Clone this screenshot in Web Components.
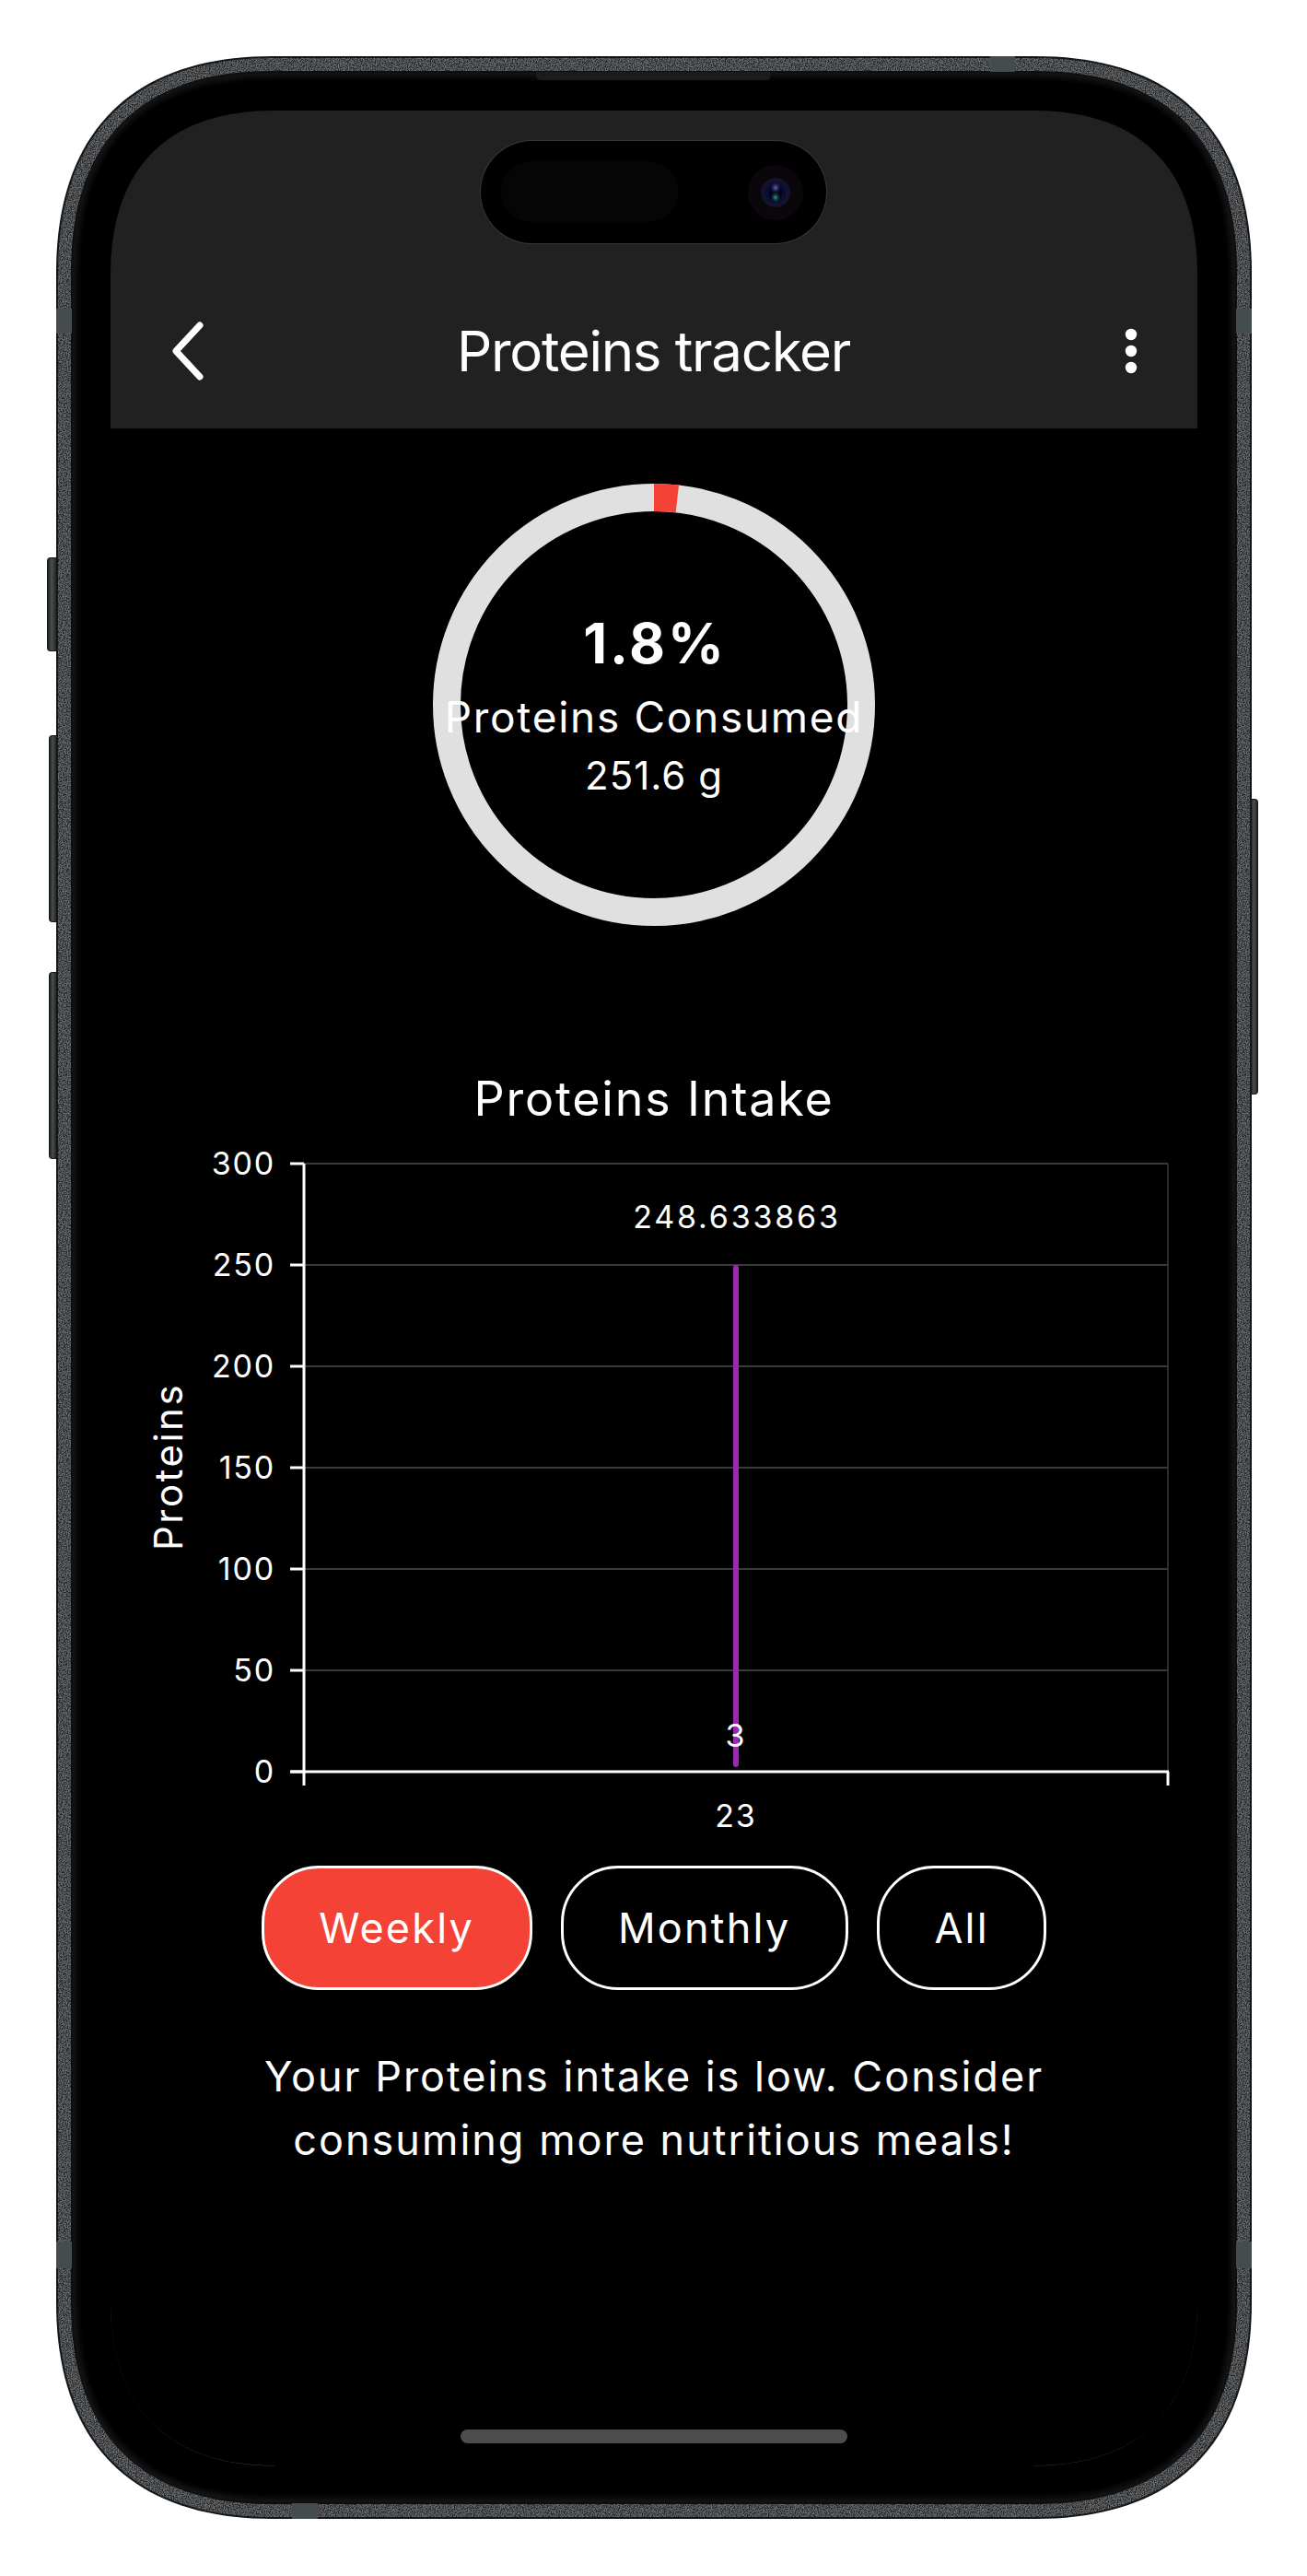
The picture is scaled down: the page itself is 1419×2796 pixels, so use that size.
<!DOCTYPE html>
<html>
<head>
<meta charset="utf-8">
<title>Proteins tracker</title>
<style>
  html, body { margin: 0; background: #fff; }
  body { padding: 61px 0 0 61px; height: 2735px; overflow: hidden; font-family: Inter, "Liberation Sans", sans-serif; color: #fff; }
</style>
</head>
<body>
<phone-frame>
  <app-bar title="Proteins tracker"></app-bar>
  <progress-ring percent="1.8">
    <strong slot="value">1.8%</strong>
    <span slot="label">Proteins Consumed</span>
    <span slot="amount">251.6 g</span>
  </progress-ring>
  <intake-chart title="Proteins Intake"></intake-chart>
  <range-tabs>
    <range-button active>Weekly</range-button>
    <range-button>Monthly</range-button>
    <range-button>All</range-button>
  </range-tabs>
  <advice-text>Your Proteins intake is low. Consider consuming more nutritious meals!</advice-text>
</phone-frame>

<script>
// continuous corner rect, a = corner length, k = control point ratio
function cornerPath(x, y, w, h, a, k = 0.65) {
  const c = a * (1 - k), r = x + w, b = y + h;
  return `M${x + a} ${y}H${r - a}C${r - c} ${y} ${r} ${y + c} ${r} ${y + a}` +
    `V${b - a}C${r} ${b - c} ${r - c} ${b} ${r - a} ${b}` +
    `H${x + a}C${x + c} ${b} ${x} ${b - c} ${x} ${b - a}` +
    `V${y + a}C${x} ${y + c} ${x + c} ${y} ${x + a} ${y}Z`;
}

class PhoneFrame extends HTMLElement {
  constructor() {
    super();
    const W = 1298, H = 2673;
    const inset = (d, a) => cornerPath(d, d, W - d * 2, H - d * 2, a);
    const root = this.attachShadow({mode: 'open'});
    const screenPath = cornerPath(0, 0, 1180, 2556, 178);
    root.innerHTML = `
      <style>
        :host { display: block; position: relative; width: ${W}px; height: ${H}px; box-sizing: border-box; padding: 59px; }
        .shell { position: absolute; left: 0; top: 0; }
        .btn { position: absolute; background: linear-gradient(90deg, #1e2021, #4a4e4f 45%, #232627); border: 1px solid #141617; box-sizing: border-box; }
        .btn.left { border-radius: 4px 0 0 4px; border-right: 0; }
        .btn.right { border-radius: 0 4px 4px 0; border-left: 0; }
        .screen { position: relative; width: 1180px; height: 2556px; background: #000; clip-path: path('${screenPath}'); display: flex; flex-direction: column; align-items: center; }
        .island { position: absolute; left: 402px; top: 33px; width: 375px; height: 111px; border-radius: 56px; background: #000; box-shadow: 0 0 0 1px rgba(255,255,255,.1); }
        .sensor { position: absolute; left: 22px; top: 22px; width: 193px; height: 66px; border-radius: 33px; background: #050505; }
        .lens { position: absolute; left: 290px; top: 26px; }
        .home { position: absolute; left: 380px; top: 2517px; width: 420px; height: 15px; border-radius: 8px; background: #4d4d4d; }
      </style>
      <div class="btn left" style="left:-10px;top:544px;width:10px;height:102px"></div>
      <div class="btn left" style="left:-8px;top:737px;width:8px;height:203px"></div>
      <div class="btn left" style="left:-8px;top:994px;width:8px;height:203px"></div>
      <div class="btn right" style="left:${W - 1}px;top:806px;width:8px;height:321px"></div>
      <svg class="shell" width="${W}" height="${H}" viewBox="0 0 ${W} ${H}">
        <defs>
          <filter id="grain" x="0" y="0" width="100%" height="100%">
            <feTurbulence type="fractalNoise" baseFrequency="0.8" numOctaves="2" seed="4" result="n"/>
            <feColorMatrix in="n" type="matrix" values="0 0 0 0 1  0 0 0 0 1  0 0 0 0 1  0 0 0 .4 -.14" result="a"/>
            <feComposite in="a" in2="SourceAlpha" operator="in" result="g"/>
            <feMerge><feMergeNode in="SourceGraphic"/><feMergeNode in="g"/></feMerge>
          </filter>
          <filter id="soft" x="-5%" y="-5%" width="110%" height="110%"><feGaussianBlur stdDeviation="4"/></filter>
          <clipPath id="inner"><path d="${inset(18, 212)}"/></clipPath>
        </defs>
        <path d="${inset(0, 235)}" fill="#141617"/>
        <path d="${inset(2, 233)}" fill="#24282a" filter="url(#grain)"/>
        <path d="${inset(16, 218)}" fill="#0d0e0f"/>
        <path d="${inset(18, 212)}" fill="#000"/>
        <g clip-path="url(#inner)"><path d="${inset(18, 212)}" fill="none" stroke="#444" stroke-width="3" filter="url(#soft)"/></g>
        <!-- antenna bands -->
        <g fill="#454c4e">
          <rect x="1014" y="0" width="27" height="17"/>
          <rect x="256" y="${H - 17}" width="28" height="17"/>
          <rect x="0" y="274" width="17" height="27"/>
          <rect x="${W - 17}" y="274" width="17" height="27"/>
          <rect x="0" y="2372" width="17" height="29"/>
          <rect x="${W - 17}" y="2372" width="17" height="29"/>
        </g>
        <path d="M521 17H776V20Q776 26 770 26H527Q521 26 521 20Z" fill="#1b1b1b"/>
        <!-- faint screen edge at the lower corners -->
        <g fill="none" stroke="#3a3a3a" stroke-width="1">
          <path d="M59.500 2437C59.500 2552.700 121.800 2615 237.500 2615"/>
          <path d="M1238.500 2437C1238.500 2552.700 1176.200 2615 1060.500 2615"/>
        </g>
      </svg>
      <div class="screen">
        <slot></slot>
        <div class="island">
          <div class="sensor"></div>
          <svg class="lens" width="60" height="60" viewBox="0 0 60 60">
            <defs>
              <radialGradient id="l1" cx="50%" cy="28%" r="30%"><stop offset="0" stop-color="#6a68c8"/><stop offset="1" stop-color="#101040" stop-opacity="0"/></radialGradient>
              <radialGradient id="l2" cx="50%" cy="72%" r="28%"><stop offset="0" stop-color="#2fa58a"/><stop offset="1" stop-color="#101040" stop-opacity="0"/></radialGradient>
            </defs>
            <circle cx="30" cy="30" r="30" fill="#0a060c"/>
            <circle cx="30" cy="30" r="16" fill="#12142c"/>
            <ellipse cx="30" cy="30" rx="11" ry="12" fill="#0b0b34"/>
            <ellipse cx="30" cy="30" rx="7" ry="10" fill="#03030c"/>
            <ellipse cx="30" cy="30" rx="11" ry="12" fill="url(#l1)"/>
            <ellipse cx="30" cy="30" rx="11" ry="12" fill="url(#l2)"/>
          </svg>
        </div>
        <div class="home"></div>
      </div>
    `;
  }
}

class AppBar extends HTMLElement {
  constructor() {
    super();
    const root = this.attachShadow({mode: 'open'});
    root.innerHTML = `
      <style>
        :host { display: grid; grid-template-columns: 1fr auto 1fr; align-items: center; box-sizing: border-box; width: 100%; height: 345px; padding: 201px 65px 24px 64px; background: #212121; }
        h1 { margin: 0; font: 380 60px/120px Inter, sans-serif; letter-spacing: -1.300px; color: #fff; white-space: nowrap; }
        svg { display: block; }
        .more { justify-self: end; }
      </style>
      <svg width="40" height="64" viewBox="0 0 40 64"><path d="M33 4L7 32L33 60" fill="none" stroke="#fff" stroke-width="7" stroke-linecap="round" stroke-linejoin="round"/></svg>
      <h1>${this.getAttribute('title')}</h1>
      <svg class="more" width="14" height="54" viewBox="0 0 14 54" fill="#fff"><circle cx="7" cy="9" r="6.200"/><circle cx="7" cy="27" r="6.200"/><circle cx="7" cy="45" r="6.200"/></svg>
    `;
  }
}

class ProgressRing extends HTMLElement {
  constructor() {
    super();
    const percent = parseFloat(this.getAttribute('percent'));
    const r = 225, c = 2 * Math.PI * r;
    const root = this.attachShadow({mode: 'open'});
    root.innerHTML = `
      <style>
        :host { display: grid; width: 480px; height: 480px; margin-top: 60px; color: #fff; }
        svg, .text { grid-area: 1 / 1; }
        svg { display: block; }
        .text { display: flex; flex-direction: column; align-items: center; padding-top: 137px; white-space: nowrap; }
        ::slotted([slot=value]) { font: 700 60px/72px Inter, sans-serif; letter-spacing: 2.800px; margin-left: 2px; }
        ::slotted([slot=label]) { font: 380 46px/64px Inter, sans-serif; letter-spacing: 1.700px; margin-top: 12px; }
        ::slotted([slot=amount]) { font: 380 42px/56px Inter, sans-serif; letter-spacing: 1px; margin-top: 4px; }
      </style>
      <svg width="480" height="480" viewBox="0 0 480 480">
        <circle cx="240" cy="240" r="${r}" fill="none" stroke="#e0e0e0" stroke-width="30"/>
        <circle cx="240" cy="240" r="${r}" fill="none" stroke="#f44336" stroke-width="30"
          stroke-dasharray="${c * percent / 100} ${c}" transform="rotate(-90 240 240)"/>
      </svg>
      <div class="text"><slot name="value"></slot><slot name="label"></slot><slot name="amount"></slot></div>
    `;
  }
}

class IntakeChart extends HTMLElement {
  constructor() {
    super();
    const left = 330, right = 1268, top = 1263, step = 110, bottom = top + step * 6;
    let ticks = '';
    for (let i = 0; i <= 6; i++) {
      const y = top + step * i;
      if (i < 6) ticks += `<line class="grid" x1="${left}" x2="${right}" y1="${y}" y2="${y}"/>`;
      ticks += `<line class="axis" x1="${left - 15}" x2="${left}" y1="${y}" y2="${y}"/>`;
      ticks += `<text class="tick" x="299" y="${y + 12}" text-anchor="end">${300 - 50 * i}</text>`;
    }
    const root = this.attachShadow({mode: 'open'});
    root.innerHTML = `
      <style>
        :host { display: block; width: 100%; margin-top: 156px; }
        h2 { margin: 0; text-align: center; font: 380 52px/64px Inter, sans-serif; letter-spacing: 1.800px; color: #fff; }
        svg { display: block; margin-top: 1px; }
        text { fill: #fff; font-family: Inter, sans-serif; font-weight: 380; }
        .tick { font-size: 34px; letter-spacing: 1.800px; }
        .value { font-size: 34px; letter-spacing: 2.800px; }
        .name { font-size: 42px; letter-spacing: 2.500px; }
        .grid { stroke: #3a3a3a; stroke-width: 2; }
        .axis { stroke: #fff; stroke-width: 3; }
      </style>
      <h2>${this.getAttribute('title')}</h2>
      <svg width="1180" height="770" viewBox="120 1226 1180 770">
        ${ticks}
        <line class="grid" x1="${right}" x2="${right}" y1="${top}" y2="${bottom}" style="stroke-width:1.500"/>
        <line class="axis" x1="${left}" x2="${left}" y1="${top}" y2="${bottom}"/>
        <line class="axis" x1="${left - 15}" x2="${right + 1}" y1="${bottom}" y2="${bottom}"/>
        <line class="axis" x1="${left}" x2="${left}" y1="${bottom}" y2="${bottom + 15}"/>
        <line class="axis" x1="${right}" x2="${right}" y1="${bottom}" y2="${bottom + 15}"/>
        <line x1="799" x2="799" y1="1376" y2="1915" stroke="#9c27b0" stroke-width="6" stroke-linecap="round"/>
        <text class="value" x="800" y="1333" text-anchor="middle">248.633863</text>
        <text class="tick" x="799" y="1896" text-anchor="middle">3</text>
        <text class="tick" x="799" y="1983" text-anchor="middle">23</text>
        <text class="name" x="198" y="1592" text-anchor="middle" transform="rotate(-90 198 1592)">Proteins</text>
      </svg>
    `;
  }
}

class RangeTabs extends HTMLElement {
  constructor() {
    super();
    this.attachShadow({mode: 'open'}).innerHTML = `
      <style>:host { display: flex; justify-content: center; gap: 31px; margin-top: 29px; }</style>
      <slot></slot>
    `;
  }
}

class RangeButton extends HTMLElement {
  constructor() {
    super();
    this.attachShadow({mode: 'open'}).innerHTML = `
      <style>
        :host { display: flex; align-items: center; box-sizing: border-box; height: 135px; padding: 0 59.500px; border: 3px solid #fff; border-radius: 62px; font: 380 45px/1 Inter, sans-serif; letter-spacing: 2.200px; color: #fff; }
        :host([active]) { background: #f44336; }
      </style>
      <slot></slot>
    `;
  }
}

class AdviceText extends HTMLElement {
  constructor() {
    super();
    this.attachShadow({mode: 'open'}).innerHTML = `
      <style>:host { display: block; width: 920px; margin-top: 60px; text-align: center; font: 380 45px/68.500px Inter, sans-serif; letter-spacing: 2px; color: #fff; }</style>
      <slot></slot>
    `;
  }
}

window.customElements.define('phone-frame', PhoneFrame);
window.customElements.define('app-bar', AppBar);
window.customElements.define('progress-ring', ProgressRing);
window.customElements.define('intake-chart', IntakeChart);
window.customElements.define('range-tabs', RangeTabs);
window.customElements.define('range-button', RangeButton);
window.customElements.define('advice-text', AdviceText);
</script>
</body>
</html>
